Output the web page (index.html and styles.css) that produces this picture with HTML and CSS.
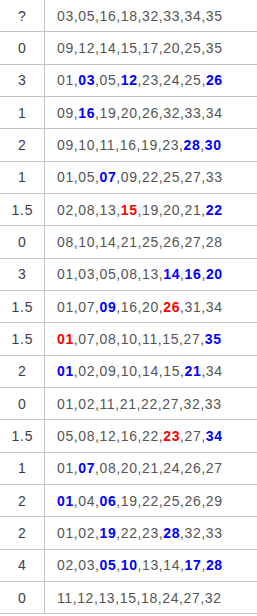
FILE: index.html
```html
<!DOCTYPE html>
<html>
<head>
<meta charset="utf-8">
<link rel="stylesheet" href="styles.css">
</head>
<body>
<div class="table">
  <div class="row"><div class="num">?</div><div class="nums">03,05,16,18,32,33,34,35</div></div>
  <div class="row"><div class="num">0</div><div class="nums">09,12,14,15,17,20,25,35</div></div>
  <div class="row"><div class="num">3</div><div class="nums">01,<b class="b">03</b>,05,<b class="b">12</b>,23,24,25,<b class="b">26</b></div></div>
  <div class="row"><div class="num">1</div><div class="nums">09,<b class="b">16</b>,19,20,26,32,33,34</div></div>
  <div class="row"><div class="num">2</div><div class="nums">09,10,11,16,19,23,<b class="b">28</b>,<b class="b">30</b></div></div>
  <div class="row"><div class="num">1</div><div class="nums">01,05,<b class="b">07</b>,09,22,25,27,33</div></div>
  <div class="row"><div class="num">1.5</div><div class="nums">02,08,13,<b class="r">15</b>,19,20,21,<b class="b">22</b></div></div>
  <div class="row"><div class="num">0</div><div class="nums">08,10,14,21,25,26,27,28</div></div>
  <div class="row"><div class="num">3</div><div class="nums">01,03,05,08,13,<b class="b">14</b>,<b class="b">16</b>,<b class="b">20</b></div></div>
  <div class="row"><div class="num">1.5</div><div class="nums">01,07,<b class="b">09</b>,16,20,<b class="r">26</b>,31,34</div></div>
  <div class="row"><div class="num">1.5</div><div class="nums"><b class="r">01</b>,07,08,10,11,15,27,<b class="b">35</b></div></div>
  <div class="row"><div class="num">2</div><div class="nums"><b class="b">01</b>,02,09,10,14,15,<b class="b">21</b>,34</div></div>
  <div class="row"><div class="num">0</div><div class="nums">01,02,11,21,22,27,32,33</div></div>
  <div class="row"><div class="num">1.5</div><div class="nums">05,08,12,16,22,<b class="r">23</b>,27,<b class="b">34</b></div></div>
  <div class="row"><div class="num">1</div><div class="nums">01,<b class="b">07</b>,08,20,21,24,26,27</div></div>
  <div class="row"><div class="num">2</div><div class="nums"><b class="b">01</b>,04,<b class="b">06</b>,19,22,25,26,29</div></div>
  <div class="row"><div class="num">2</div><div class="nums">01,02,<b class="b">19</b>,22,23,<b class="b">28</b>,32,33</div></div>
  <div class="row"><div class="num">4</div><div class="nums">02,03,<b class="b">05</b>,<b class="b">10</b>,13,14,<b class="b">17</b>,<b class="b">28</b></div></div>
  <div class="row"><div class="num">0</div><div class="nums">11,12,13,15,18,24,27,32</div></div>
</div>
</body>
</html>
```
FILE: styles.css
```css
html, body {
  margin: 0;
  padding: 0;
  background: #fff;
}
body {
  font-family: "Liberation Sans", Arial, sans-serif;
  font-size: 14px;
  overflow: hidden;
}
.table {
  margin-top: -1px;
  border-top: 1px solid #c4c4c4;
  width: 260px;
}
.row {
  display: flex;
  height: 32.33px;
  box-sizing: border-box;
  border-bottom: 1px solid #c4c4c4;
}
.num {
  width: 44px;
  flex: none;
  border-right: 1px solid #c4c4c4;
  display: flex;
  align-items: center;
  justify-content: center;
  color: #3c3c4a;
  letter-spacing: 0.8px;
  text-indent: 0.8px;
}
.nums {
  display: flex;
  align-items: center;
  padding-left: 12px;
  color: #555;
  letter-spacing: 0.6px;
  white-space: pre;
}
.b {
  color: #0000ff;
  font-weight: bold;
}
.r {
  color: #ff0000;
  font-weight: bold;
}
```
